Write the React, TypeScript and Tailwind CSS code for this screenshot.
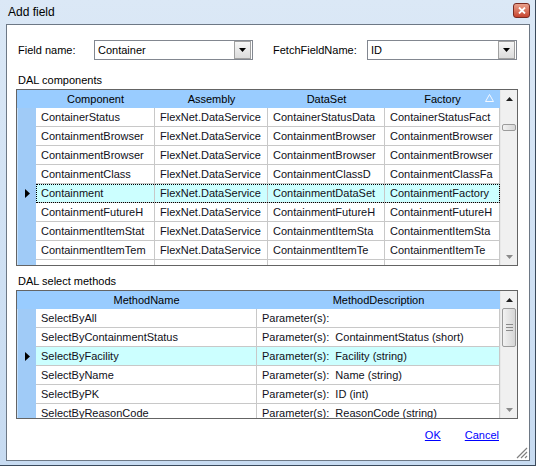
import React from 'react';

const font = { fontFamily: '"Liberation Sans", Arial, sans-serif' };

type Col = { title: string; w: string };

const componentCols: Col[] = [
    { title: 'Component', w: 'w-[119px]' },
    { title: 'Assembly', w: 'w-[113px]' },
    { title: 'DataSet', w: 'w-[117px]' },
    { title: 'Factory', w: 'w-[115px]' },
];

const componentRows = [
    ['ContainerStatus', 'FlexNet.DataService', 'ContainerStatusData', 'ContainerStatusFact'],
    ['ContainmentBrowser', 'FlexNet.DataService', 'ContainmentBrowser', 'ContainmentBrowser'],
    ['ContainmentBrowser', 'FlexNet.DataService', 'ContainmentBrowser', 'ContainmentBrowser'],
    ['ContainmentClass', 'FlexNet.DataService', 'ContainmentClassD', 'ContainmentClassFa'],
    ['Containment', 'FlexNet.DataService', 'ContainmentDataSet', 'ContainmentFactory'],
    ['ContainmentFutureH', 'FlexNet.DataService', 'ContainmentFutureH', 'ContainmentFutureH'],
    ['ContainmentItemStat', 'FlexNet.DataService', 'ContainmentItemSta', 'ContainmentItemSta'],
    ['ContainmentItemTem', 'FlexNet.DataService', 'ContainmentItemTe', 'ContainmentItemTe'],
    ['ContainmentLocHist', 'FlexNet.DataService', 'ContainmentLocHi', 'ContainmentLocHi'],
];

const methodCols: Col[] = [
    { title: 'MethodName', w: 'w-[221px]' },
    { title: 'MethodDescription', w: 'w-[243px]' },
];

const methodRows = [
    ['SelectByAll', 'Parameter(s):'],
    ['SelectByContainmentStatus', 'Parameter(s):  ContainmentStatus (short)'],
    ['SelectByFacility', 'Parameter(s):  Facility (string)'],
    ['SelectByName', 'Parameter(s):  Name (string)'],
    ['SelectByPK', 'Parameter(s):  ID (int)'],
    ['SelectByReasonCode', 'Parameter(s):  ReasonCode (string)'],
    ['SelectByStatus', 'Parameter(s):  Status (string)'],
];

function Arrow({ up }: { up?: boolean }) {
    return (
        <svg width="7" height="4" viewBox="0 0 7 4">
            <path d={up ? 'M0 4 L3.5 0 L7 4 Z' : 'M0 0 L3.5 4 L7 0 Z'} fill={up ? '#202020' : '#8a8a8a'} />
        </svg>
    );
}

function ScrollBar({ thumbTop, thumbH, grip }: { thumbTop: number; thumbH: number; grip?: boolean }) {
    return (
        <div className="w-[17px] h-full bg-[#f0f0f0] flex flex-col border-l border-[#e8e8e8]">
            <div className="h-[17px] flex items-center justify-center shrink-0">
                <Arrow up />
            </div>
            <div className="flex-1 relative">
                <div
                    className="absolute left-[1px] right-[1px] rounded-[2px] border border-[#9b9b9b] bg-gradient-to-r from-[#f2f2f2] to-[#d6d6d6] flex flex-col items-center justify-center gap-[2px]"
                    style={{ top: thumbTop, height: thumbH }}
                >
                    {grip && (
                        <>
                            <div className="w-[7px] h-px bg-[#8a8a8a]" />
                            <div className="w-[7px] h-px bg-[#8a8a8a]" />
                            <div className="w-[7px] h-px bg-[#8a8a8a]" />
                        </>
                    )}
                </div>
            </div>
            <div className="h-[17px] flex items-center justify-center shrink-0">
                <Arrow />
            </div>
        </div>
    );
}

function Grid({
    cols,
    rows,
    selected,
    height,
    focusRect,
    sortCol,
    thumbTop,
    thumbH,
    grip,
}: {
    cols: Col[];
    rows: string[][];
    selected: number;
    height: string;
    focusRect?: boolean;
    sortCol?: number;
    thumbTop: number;
    thumbH: number;
    grip?: boolean;
}) {
    return (
        <div className={`w-[502px] ${height} border border-[#646464] bg-white flex overflow-hidden`}>
            <div className="flex flex-col w-[483px] overflow-hidden">
                <div className="h-[18px] shrink-0 flex bg-[#99ccff]">
                    <div className="w-[19px] shrink-0" />
                    {cols.map((c, i) => (
                        <div
                            key={c.title}
                            className={`${c.w} shrink-0 relative flex items-center justify-center text-[11px] text-black`}
                        >
                            {c.title}
                            {sortCol === i && (
                                <svg className="absolute right-[6px] top-[4px]" width="9" height="8" viewBox="0 0 9 8">
                                    <path d="M4.5 0.5 L8.5 7.5 L0.5 7.5 Z" fill="none" stroke="#f4f8ff" />
                                </svg>
                            )}
                        </div>
                    ))}
                </div>
                {rows.map((r, ri) => {
                    const sel = ri === selected;
                    return (
                        <div key={ri} className="h-[19px] shrink-0 flex">
                            <div className="w-[19px] shrink-0 bg-[#a0cbf7] border-l border-[#c4e0fc] flex items-center justify-center">
                                {sel && (
                                    <svg width="5" height="9" viewBox="0 0 5 9">
                                        <path d="M0 0 L5 4.5 L0 9 Z" fill="#000" />
                                    </svg>
                                )}
                            </div>
                            <div
                                className={`flex ${sel ? 'bg-[#ccffff]' : ''} ${sel && focusRect ? 'outline-1 outline-dotted outline-black -outline-offset-1' : ''}`}
                            >
                                {r.map((cell, ci) => (
                                    <div
                                        key={ci}
                                        className={`${cols[ci].w} shrink-0 h-[19px] border-r border-b border-[#c8c8c8] pl-[5px] flex items-center text-[11px] text-[#101020] whitespace-pre overflow-hidden`}
                                    >
                                        {cell}
                                    </div>
                                ))}
                            </div>
                        </div>
                    );
                })}
            </div>
            <ScrollBar thumbTop={thumbTop} thumbH={thumbH} grip={grip} />
        </div>
    );
}

function Combo({ value, w }: { value: string; w: string }) {
    return (
        <div className={`${w} h-[20px] border border-[#828790] bg-white flex items-center`}>
            <span className="flex-1 pl-[3px] text-[11px] text-black">{value}</span>
            <div className="w-[17px] h-[18px] mr-px border border-[#a0a0a0] bg-gradient-to-b from-[#f6f6f6] to-[#dcdcdc] flex items-center justify-center">
                <svg width="7" height="4" viewBox="0 0 7 4">
                    <path d="M0 0 L3.5 4 L7 0 Z" fill="#000" />
                </svg>
            </div>
        </div>
    );
}

export default function App() {
    return (
        <div
            className="w-[536px] h-[466px] bg-gradient-to-b from-[#dbe8f6] to-[#c7dbf1] border-r border-b border-[#3a4a5c] flex flex-col"
            style={font}
        >
            {/* title bar */}
            <div className="h-[24px] shrink-0 flex items-center pl-[8px] pr-[5px]">
                <span className="flex-1 text-[12px] text-black">Add field</span>
                <div className="w-[17px] h-[15px] mb-[4px] rounded-[3px] border border-[#7a2a20] bg-gradient-to-b from-[#e8a08c] to-[#c7432e] flex items-center justify-center">
                    <svg width="8" height="7" viewBox="0 0 8 7">
                        <path d="M1 0.5 L7 6.5 M7 0.5 L1 6.5" stroke="#ffffff" strokeWidth="1.8" />
                    </svg>
                </div>
            </div>

            {/* client area */}
            <div className="ml-[6px] w-[524px] h-[437px] border border-[#6d7885] bg-white flex flex-col pl-[9px]">
                <div className="mt-[15px] h-[20px] flex items-center">
                    <span className="w-[78px] pl-[2px] text-[11px] text-black">Field name:</span>
                    <Combo value="Container" w="w-[159px]" />
                    <span className="ml-[20px] w-[94px] text-[11px] text-black">FetchFieldName:</span>
                    <Combo value="ID" w="w-[150px]" />
                </div>

                <div className="mt-[14px] h-[13px] leading-[13px] pl-[2px] text-[11px] text-black">DAL components</div>
                <div className="mt-[2px]">
                    <Grid
                        cols={componentCols}
                        rows={componentRows}
                        selected={4}
                        height="h-[177px]"
                        focusRect
                        sortCol={3}
                        thumbTop={17}
                        thumbH={7}
                    />
                </div>

                <div className="mt-[9px] h-[13px] leading-[13px] pl-[2px] text-[11px] text-black">DAL select methods</div>
                <div className="mt-[2px]">
                    <Grid
                        cols={methodCols}
                        rows={methodRows}
                        selected={2}
                        height="h-[129px]"
                        thumbTop={0}
                        thumbH={39}
                        grip
                    />
                </div>

                <div className="mt-[8px] flex justify-end pr-[30px] gap-[24px] text-[11px]">
                    <a className="text-[#0000ff] underline cursor-pointer">OK</a>
                    <a className="text-[#0000ff] underline cursor-pointer">Cancel</a>
                </div>

                <div className="flex-1 flex items-end justify-end pr-[1px] pb-[1px]">
                    <svg width="12" height="12" viewBox="0 0 12 12">
                        <path d="M11 1 L1 11 M11 5 L5 11 M11 9 L9 11" stroke="#808080" strokeWidth="1.2" />
                    </svg>
                </div>
            </div>
        </div>
    );
}
